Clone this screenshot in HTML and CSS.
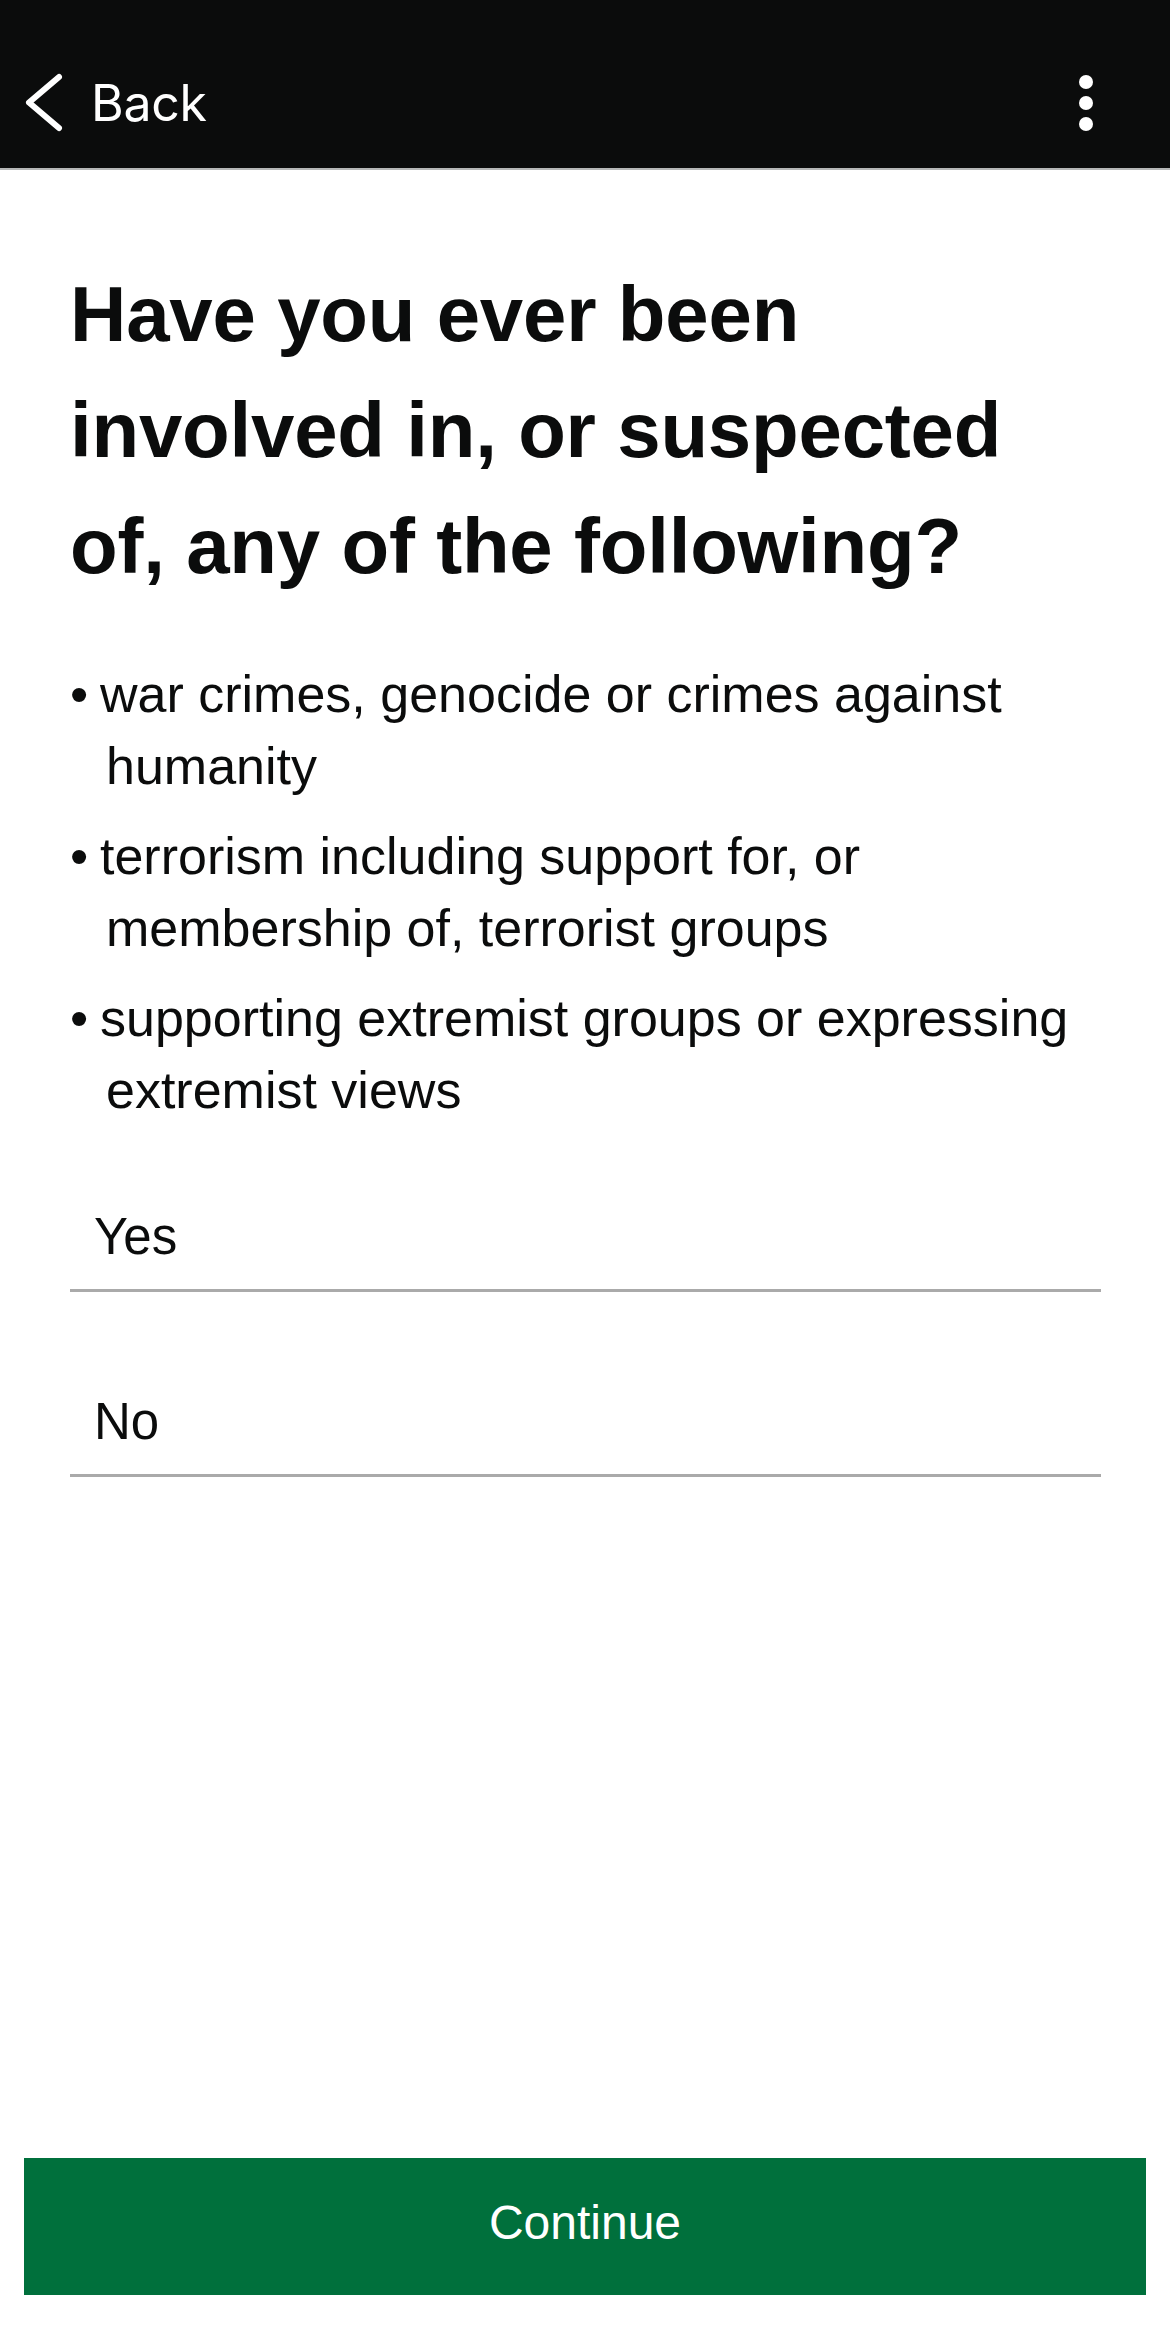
FILE: index.html
```html
<!DOCTYPE html>
<html lang="en">
<head>
<meta charset="utf-8">
<title>Have you ever been involved in, or suspected of, any of the following?</title>
<link rel="stylesheet" href="styles.css">
</head>
<body>
<div class="page">
  <header class="topbar">
    <div class="back">
      <svg class="chev" width="40" height="60" viewBox="0 0 40 60" aria-hidden="true">
        <polyline points="35,4 5,29.5 35,55" fill="none" stroke="#ffffff" stroke-width="6" stroke-linecap="round" stroke-linejoin="round"/>
      </svg>
      <span class="back-label">Back</span>
    </div>
    <svg class="more" width="20" height="60" viewBox="0 0 20 60" aria-hidden="true">
      <circle cx="10" cy="9" r="7" fill="#ffffff"/>
      <circle cx="10" cy="30" r="7" fill="#ffffff"/>
      <circle cx="10" cy="51" r="7" fill="#ffffff"/>
    </svg>
  </header>

  <main class="content">
    <h1 class="title">Have you ever been involved in, or suspected of, any of the following?</h1>
    <ul class="bullets">
      <li>war crimes, genocide or crimes against humanity</li>
      <li>terrorism including support for, or membership of, terrorist groups</li>
      <li>supporting extremist groups or expressing extremist views</li>
    </ul>
    <div class="options">
      <div class="option">Yes</div>
      <div class="option">No</div>
    </div>
  </main>

  <div class="footer">
    <button class="continue" type="button">Continue</button>
  </div>
</div>
</body>
</html>
```

FILE: styles.css
```css
html, body {
  margin: 0;
  padding: 0;
  background: #ffffff;
}

body {
  font-family: "Liberation Sans", Arial, sans-serif;
  color: #0b0c0c;
}

.page {
  min-height: 2340px;
  display: flex;
  flex-direction: column;
}

.topbar {
  background: #0b0c0c;
  height: 130px;
  padding-top: 38px;
  border-bottom: 2px solid #b6b8b8;
  display: flex;
  align-items: center;
  justify-content: space-between;
}

.back {
  display: flex;
  align-items: center;
  margin-left: 24px;
}

.chev {
  display: block;
}

.back-label {
  font-family: Inter, "Liberation Sans", sans-serif;
  font-size: 50px;
  color: #ffffff;
  margin-left: 27px;
  letter-spacing: -0.3px;
}

.more {
  display: block;
  margin-right: 74px;
}

.content {
  padding: 0 69px 0 70px;
}

.title {
  margin: 86px 0 0 0;
  max-width: 1000px;
  font-size: 78px;
  line-height: 116px;
  font-weight: 700;
  letter-spacing: -0.2px;
}

.bullets {
  list-style: none;
  margin: 54px 0 0 0;
  padding: 0;
  font-size: 52px;
  line-height: 72px;
}

.bullets li {
  padding-left: 36px;
  text-indent: -36px;
  margin-bottom: 18px;
}

.bullets li:last-child {
  margin-bottom: 0;
}

.bullets li::before {
  content: "\2022";
  display: inline-block;
  width: 30px;
  text-indent: 0;
}

.options {
  margin-top: -19px;
}

.option {
  height: 160px;
  padding: 0 0 22px 24px;
  border-bottom: 3px solid #aaaaaa;
  display: flex;
  align-items: flex-end;
  font-size: 51px;
  line-height: 60px;
}

.footer {
  margin-top: auto;
  padding: 0 24px 45px 24px;
}

.continue {
  display: block;
  width: 100%;
  height: 137px;
  border: 0;
  border-radius: 0;
  background: #00703c;
  color: #ffffff;
  font-family: "Liberation Sans", Arial, sans-serif;
  font-size: 48px;
  padding: 0 0 8px 0;
}
```
